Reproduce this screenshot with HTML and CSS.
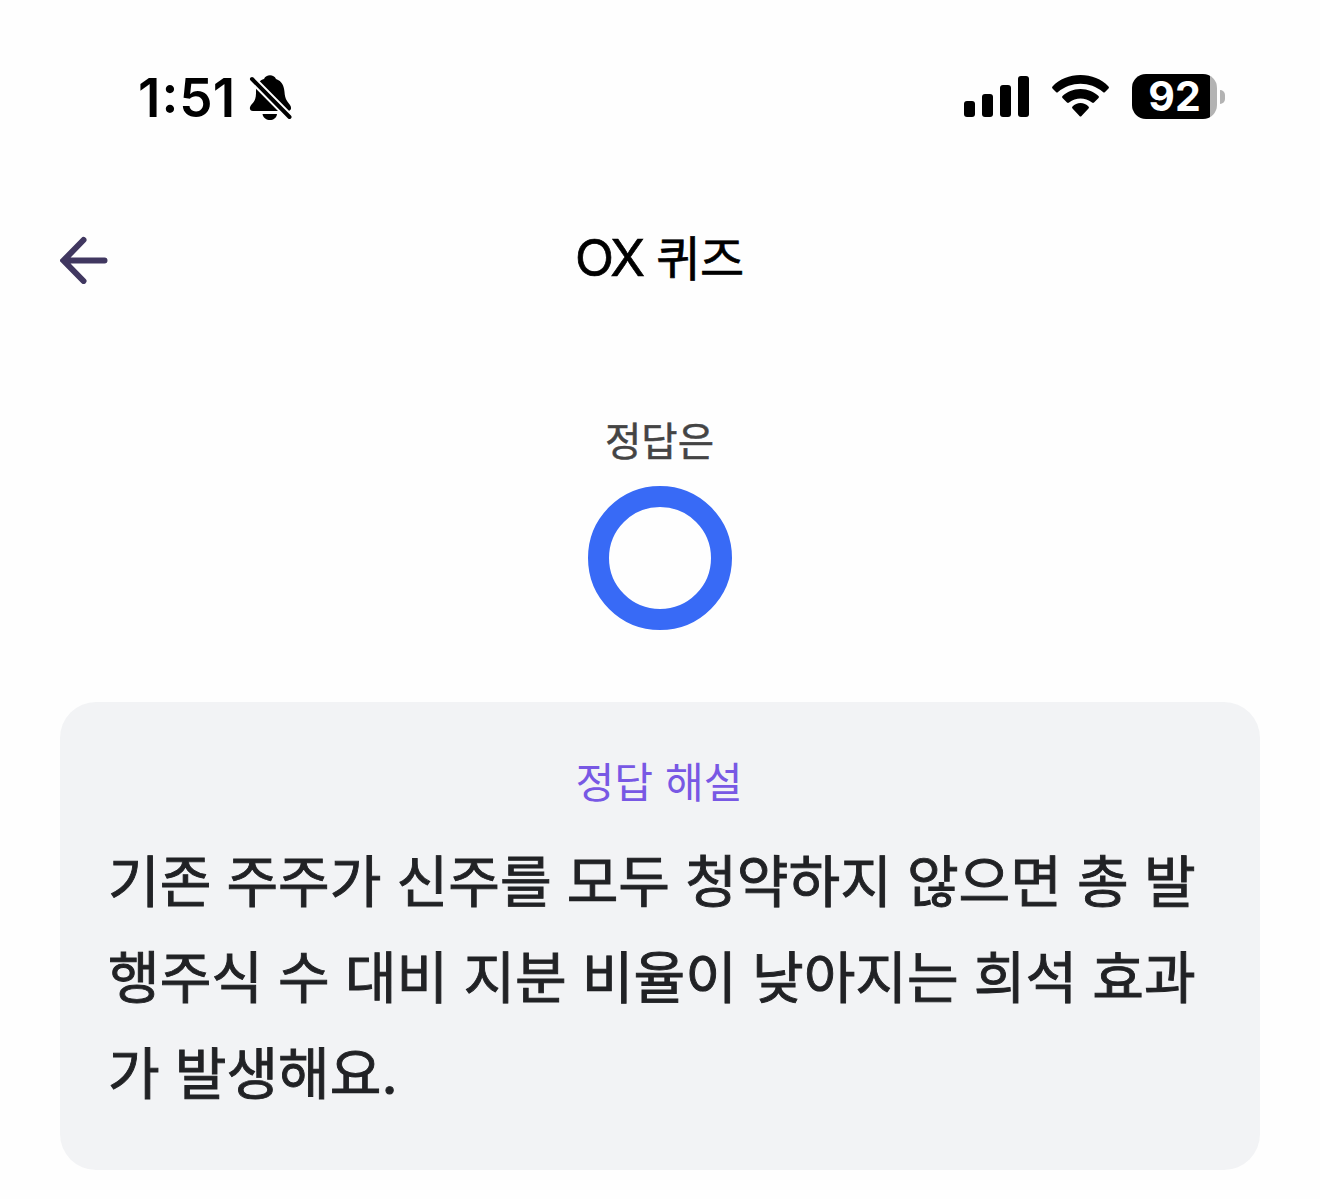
FILE: index.html
```
<!DOCTYPE html>
<html lang="ko">
<head>
  <meta charset="UTF-8">
  <meta name="viewport" content="width=device-width, initial-scale=1.0">
  <title>OX 퀴즈</title>
  <link rel="stylesheet" href="styles.css">
</head>
<body>
  <!-- Status Bar -->
  <div class="status-bar">
    <div class="status-left">
      <span class="time">1<span class="time-colon">:</span>51</span>
      <svg class="bell-icon" width="44" height="48" viewBox="0 0 44 48">
        <path d="M4 37C0 37 0 33 3 30C7 26 7 22 7 17C7 10 11 6 15 5C17 0 25 0 27 5C33 7 35 12 35.500 18C36 25 38 27 41 31C43 34 42 37 39 37Z"/>
        <path d="M13.500 40H28C27 48 15 48 13.500 40Z"/>
        <path class="bell-gap" d="M3 5L40.500 43"/>
        <path class="bell-slash" d="M3 5L40.500 43"/>
      </svg>
    </div>
    <div class="status-right">
      <svg class="signal-icon" width="66" height="42" viewBox="0 0 66 42">
        <rect x="0" y="25" width="11" height="16" rx="3"/>
        <rect x="18" y="18" width="11" height="23" rx="3"/>
        <rect x="36" y="9" width="11" height="32" rx="3"/>
        <rect x="54" y="0" width="11" height="41" rx="3"/>
      </svg>
      <svg class="wifi-icon" width="58" height="42" viewBox="0 0 58 42">
        <path d="M28.500 0C39.500 0 49.500 4 56.500 11.500Q57.500 12.500 56.500 13.500L53 17Q52 18 51 17C38 6 19 6 6 17Q5 18 4 17L0.500 13.500Q-0.500 12.500 0.500 11.500C7.500 4 17.500 0 28.500 0Z"/>
        <path d="M28.500 14C36 14 42 17 46.500 21Q47.500 22 46.500 23L42 27.500Q41 28.300 40 27.500C33 22 24 22 17 27.500Q16 28.300 15 27.500L10.500 23Q9.500 22 10.500 21C15 17 21 14 28.500 14Z"/>
        <path d="M28.500 28C31.500 28 34.500 29.500 36.500 31.500Q37.500 32.500 36.500 33.500L29.500 41Q28.500 42 27.500 41L20.500 33.500Q19.500 32.500 20.500 31.500C22.500 29.500 25.500 28 28.500 28Z"/>
      </svg>
      <div class="battery">
        <div class="battery-body">92</div>
        <div class="battery-cap"></div>
      </div>
    </div>
  </div>

  <!-- Header -->
  <header class="header">
    <button type="button" class="back-button" aria-label="뒤로">
      <svg width="48" height="48" viewBox="0 0 48 48">
        <path d="M23.500 4L3.500 24.500L23.500 45M4 24.500H44.500"/>
      </svg>
    </button>
    <h1 class="header-title"><span class="header-latin">OX</span> 퀴즈</h1>
  </header>

  <!-- Answer -->
  <main class="main-content">
    <p class="answer-label">정답은</p>
    <div class="answer-circle"></div>

    <section class="explanation">
      <h2 class="explanation-title">정답 해설</h2>
      <p class="explanation-text">기존 주주가 신주를 모두 청약하지 않으면 총 발행주식 수 대비 지분 비율이 낮아지는 희석 효과가 발생해요.</p>
    </section>
  </main>
</body>
</html>
```
FILE: styles.css
```
* {
  margin: 0;
  padding: 0;
  box-sizing: border-box;
}

body {
  background-color: #fefefe;
  font-family: Inter, "Noto Sans CJK KR", sans-serif;
  height: 1199px;
  overflow: hidden;
}

.status-bar {
  display: flex;
  justify-content: space-between;
  height: 200px;
  padding: 74px 95px 0 138px;
}

.status-left {
  display: flex;
  height: 48px;
}

.time {
  font-size: 53px;
  font-weight: 600;
  line-height: 49px;
  width: 111px;
  white-space: nowrap;
}

.time-colon {
  display: inline-block;
  margin: 0 1px;
  transform: translateY(-4px);
}

.bell-gap,
.bell-slash {
  fill: none;
  stroke: #000;
  stroke-width: 4;
  stroke-linecap: round;
}

.bell-gap {
  stroke: #fefefe;
  stroke-width: 8;
}

.status-right {
  display: flex;
  align-items: flex-start;
}

.signal-icon {
  margin: 2px 22px 0 0;
}

.wifi-icon {
  margin: 1px 22px 0 0;
  overflow: visible;
}

.battery {
  display: flex;
  align-items: center;
  gap: 3px;
}

.battery-body {
  width: 85px;
  height: 45px;
  border-radius: 14px;
  background: linear-gradient(to right, #000 78px, #b3b3b3 78px);
  color: #fff;
  font-size: 41px;
  font-weight: 700;
  line-height: 45px;
  text-align: center;
}

.battery-cap {
  width: 5px;
  height: 14px;
  border-radius: 0 7px 7px 0;
  background-color: #b3b3b3;
}

.header {
  display: grid;
  grid-template-columns: 48px 1fr 48px;
  align-items: center;
  height: 120px;
  padding: 0 60px;
}

.back-button {
  height: 48px;
  background: none;
  border: none;
}

.back-button svg {
  display: block;
  fill: none;
  stroke: #403760;
  stroke-width: 6;
  stroke-linecap: round;
}

.header-title {
  margin: -3px 0 0 -1px;
  font-size: 48px;
  font-weight: 400;
  line-height: 72px;
  letter-spacing: -0.3px;
  text-align: center;
  -webkit-text-stroke: 0.7px #000;
}

.header-latin {
  font-size: 51px;
  letter-spacing: -2px;
}

.main-content {
  display: flex;
  flex-direction: column;
  align-items: center;
  padding: 90px 60px 0;
}

.answer-label {
  margin-left: -1px;
  color: #444;
  font-size: 39.5px;
  font-weight: 400;
  line-height: 64px;
  -webkit-text-stroke: 0.5px #444;
}

.answer-circle {
  width: 144px;
  height: 144px;
  margin-top: 12px;
  border: 21px solid #386af6;
  border-radius: 50%;
}

.explanation {
  width: 1200px;
  height: 468px;
  margin-top: 72px;
  padding: 48px 48px 0;
  border-radius: 36px;
  background-color: #f2f3f5;
}

.explanation-title {
  margin-left: -2px;
  color: #7858e4;
  font-size: 42.2px;
  font-weight: 400;
  line-height: 66px;
  text-align: center;
}

.explanation-text {
  margin-top: 18px;
  color: #212225;
  font-size: 56.2px;
  font-weight: 400;
  line-height: 96px;
  letter-spacing: -0.04px;
  word-spacing: -0.6px;
  word-break: break-all;
  -webkit-text-stroke: 0.9px #212225;
}
```
